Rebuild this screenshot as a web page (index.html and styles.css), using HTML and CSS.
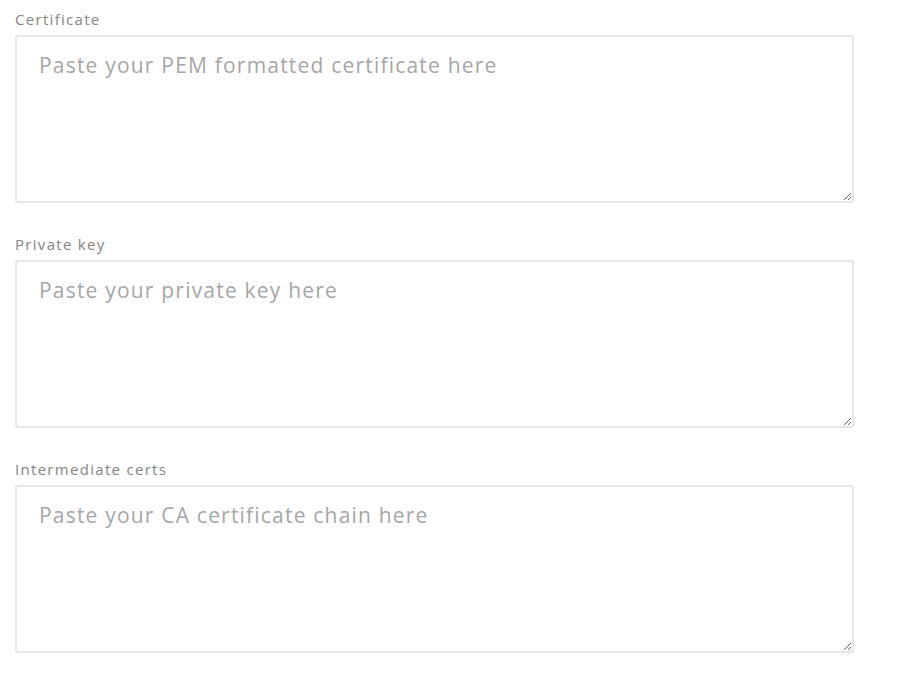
FILE: index.html
```
<!DOCTYPE html>
<html>
<head>
<meta charset="utf-8">
<link rel="stylesheet" href="styles.css">
</head>
<body>
<form class="form">
  <div class="field">
    <label class="label" for="cert">Certificate</label>
    <textarea id="cert" class="input" placeholder="Paste your PEM formatted certificate here"></textarea>
  </div>
  <div class="field">
    <label class="label" for="key">Private key</label>
    <textarea id="key" class="input" placeholder="Paste your private key here"></textarea>
  </div>
  <div class="field">
    <label class="label" for="chain">Intermediate certs</label>
    <textarea id="chain" class="input" placeholder="Paste your CA certificate chain here"></textarea>
  </div>
</form>
</body>
</html>
```
FILE: styles.css
```
html, body {
  margin: 0;
  background: #ffffff;
}
body {
  font-family: "Open Sans", "Noto Sans", sans-serif;
}
.form {
  display: flex;
  flex-direction: column;
  gap: 32px;
  padding: 10px 0 0 15px;
  width: 839px;
}
.field {
  display: flex;
  flex-direction: column;
}
.label {
  font-size: 15px;
  line-height: 18px;
  letter-spacing: 1.3px;
  color: #858585;
  margin-bottom: 7px;
}
.input {
  box-sizing: border-box;
  height: 168px;
  width: 100%;
  border: 2px solid #e6e6e6;
  border-radius: 3px;
  padding: 14px 22px 10px;
  font-family: "Open Sans", "Noto Sans", sans-serif;
  font-size: 21px;
  line-height: 28px;
  letter-spacing: 1.2px;
  color: #333;
  resize: vertical;
  outline: none;
}
.input::placeholder {
  color: #a6a6a6;
}
```
